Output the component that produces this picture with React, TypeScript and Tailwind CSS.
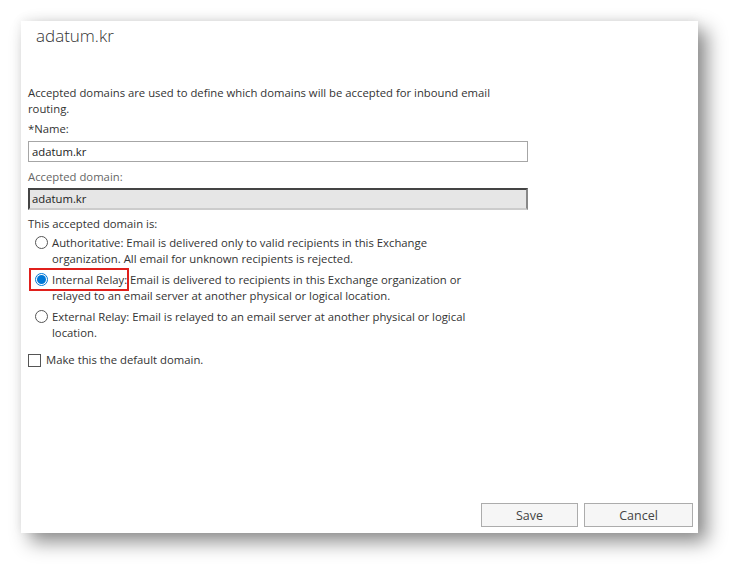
import { useState } from "react";

const font = { fontFamily: '"Open Sans", "Noto Sans", sans-serif' };

function Radio({ checked }: { checked: boolean }) {
  return checked ? (
    <span className="mt-[1px] flex h-[13px] w-[13px] shrink-0 items-center justify-center rounded-full border border-[#0078d7] bg-white">
      <span className="h-[9px] w-[9px] rounded-full bg-[#0078d7]" />
    </span>
  ) : (
    <span className="mt-[1px] h-[13px] w-[13px] shrink-0 rounded-full border border-[#555] bg-white" />
  );
}

export default function App() {
  const [kind, setKind] = useState("internal");
  const [isDefault, setIsDefault] = useState(false);

  const options = [
    { id: "auth", label: "Authoritative:", text: " Email is delivered only to valid recipients in this Exchange", text2: "organization. All email for unknown recipients is rejected." },
    { id: "internal", label: "Internal Relay:", text: " Email is delivered to recipients in this Exchange organization or", text2: "relayed to an email server at another physical or logical location." },
    { id: "external", label: "External Relay:", text: " Email is relayed to an email server at another physical or logical", text2: "location." },
  ];

  return (
    <div className="h-[576px] w-[740px] bg-white pl-[21px] pt-[21px]" style={font}>
      <div className="relative flex h-[512px] w-[677px] flex-col bg-white text-[11.3px] leading-[16px] text-[#333] shadow-[0_-2px_10px_rgba(0,0,0,0.06),9px_9px_18px_rgba(0,0,0,0.45)]">
        <div className="pl-[15px] pt-[3px] text-[17px] font-light leading-[24px] text-[#333]">adatum.kr</div>

        <div className="mt-[37px] px-[7px]">
          <p>
            Accepted domains are used to define which domains will be accepted for inbound email
            <br />
            routing.
          </p>

          <div className="mt-[4px]">*Name:</div>
          <div className="mt-[4px] flex h-[21px] w-[500px] items-center border border-[#a6a6a6] px-[3px] text-[#222]">
            adatum.kr
          </div>

          <div className="mt-[7px] text-[#666]">Accepted domain:</div>
          <div className="mt-[3px] flex h-[22px] w-[500px] items-center border-2 border-[#444] border-b-[#ccc] border-r-[#888] bg-[#e6e6e6] px-[2px] text-[#222]">
            adatum.kr
          </div>

          <div className="mt-[6px]">This accepted domain is:</div>
          <div className="mt-[3px] flex flex-col gap-[5px] pl-[7px]">
            {options.map((o) => (
              <label key={o.id} className="flex cursor-pointer items-start gap-[4px]" onClick={() => setKind(o.id)}>
                <Radio checked={kind === o.id} />
                <span>
                  <span className={o.id === "internal" ? "relative" : ""}>
                    {o.label}
                    {o.id === "internal" && (
                      <span className="absolute left-[-23px] top-[-4px] h-[23px] w-[100px] border-2 border-[#e0201c]" />
                    )}
                  </span>
                  {o.text}
                  <br />
                  {o.text2}
                </span>
              </label>
            ))}
          </div>

          <label className="mt-[11px] flex cursor-pointer items-center gap-[5px]" onClick={() => setIsDefault(!isDefault)}>
            <span className="flex h-[13px] w-[13px] items-center justify-center border border-[#555] bg-white text-[10px] leading-none">
              {isDefault ? "✓" : ""}
            </span>
            Make this the default domain.
          </label>
        </div>

        <div className="mt-auto mb-[6px] flex justify-end gap-[6px] pr-[5px] text-[12.5px] text-[#444]">
          <button className="h-[24px] w-[97px] border border-[#acacac] bg-[#f6f6f6] pt-[2px]">Save</button>
          <button className="h-[24px] w-[109px] border border-[#acacac] bg-[#f6f6f6] pt-[2px]">Cancel</button>
        </div>
      </div>
    </div>
  );
}
